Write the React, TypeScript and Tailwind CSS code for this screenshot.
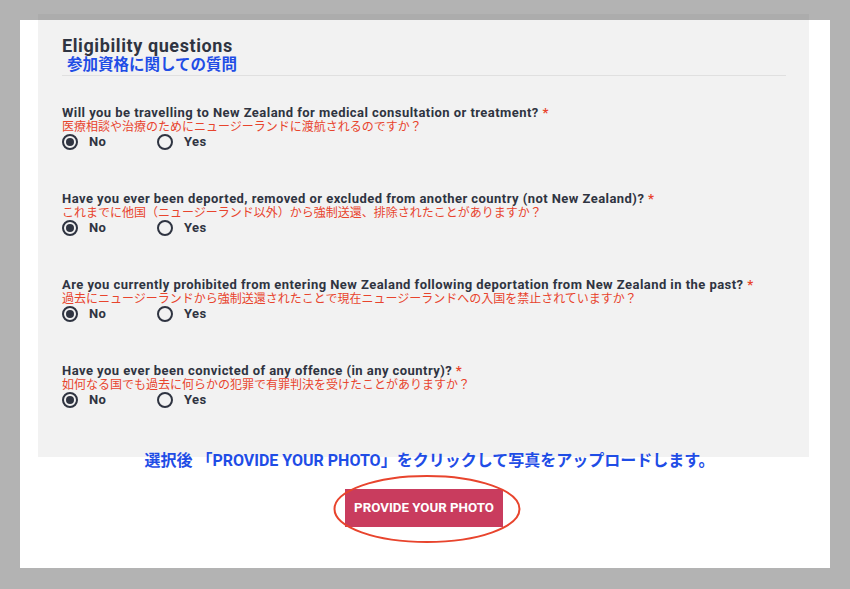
import React from "react";

const preguntas = [
  {
    en: "Will you be travelling to New Zealand for medical consultation or treatment?",
    ja: "医療相談や治療のためにニュージーランドに渡航されるのですか？",
  },
  {
    en: "Have you ever been deported, removed or excluded from another country (not New Zealand)?",
    ja: "これまでに他国（ニュージーランド以外）から強制送還、排除されたことがありますか？",
  },
  {
    en: "Are you currently prohibited from entering New Zealand following deportation from New Zealand in the past?",
    ja: "過去にニュージーランドから強制送還されたことで現在ニュージーランドへの入国を禁止されていますか？",
  },
  {
    en: "Have you ever been convicted of any offence (in any country)?",
    ja: "如何なる国でも過去に何らかの犯罪で有罪判決を受けたことがありますか？",
  },
];

const Radio: React.FC<{ checked?: boolean; label: string }> = ({ checked, label }) => (
  <label className="flex items-center gap-[11px]">
    <span className="w-[16px] h-[16px] rounded-full border-2 border-[#2f3441] flex items-center justify-center">
      {checked && <span className="w-[8px] h-[8px] rounded-full bg-[#2f3441]"></span>}
    </span>
    <span className="text-[13px] font-bold tracking-[0.4px] text-[#2f3441]">{label}</span>
  </label>
);

export default function App() {
  return (
    <div
      className="w-[850px] h-[589px] bg-[#b3b3b3] pt-[14px] overflow-hidden"
      style={{ fontFamily: "Roboto, 'Noto Sans CJK JP', sans-serif" }}
    >
      <div className="ml-[38px] w-[771px] h-[6px] bg-[#acacac]"></div>
      <div className="ml-[20px] w-[810px] h-[548px] bg-white">
        {/* Panel de preguntas */}
        <div className="ml-[18px] w-[771px] h-[437px] bg-[#f2f2f2] pl-[24px] pr-[23px] pt-[16px]">
          <h2 className="text-[18px] leading-[20px] font-bold tracking-[0.6px] text-[#2f3441]">Eligibility questions</h2>
          <div className="pl-[5px] text-[15.5px] leading-[18px] font-bold text-[#1f4de6]">参加資格に関しての質問</div>
          <div className="border-b border-[#e0e0e0] mt-[1px]"></div>

          <div className="pt-[30px] flex flex-col gap-[42px]">
            {preguntas.map((p, i) => (
              <div key={i}>
                <div className="text-[13px] leading-[14px] font-bold tracking-[0.45px] text-[#2f3441]">
                  {p.en} <span className="text-[#e8442d]">*</span>
                </div>
                <div className="text-[12px] leading-[14px] text-[#e8442d]">{p.ja}</div>
                <div className="flex items-center h-[16px]">
                  <div className="w-[95px]">
                    <Radio checked label="No" />
                  </div>
                  <Radio label="Yes" />
                </div>
              </div>
            ))}
          </div>
        </div>

        <div className="-mt-[6px] text-center pl-[9px] text-[16px] leading-[20px] font-bold text-[#1f4de6]">
          選択後 「PROVIDE YOUR PHOTO」をクリックして写真をアップロードします。
        </div>

        <div className="flex justify-center mt-[18px] pr-[2px]">
          <div className="relative">
            <button className="w-[158px] h-[38px] bg-[#c93c5e] text-white text-[13.3px] font-bold">
              PROVIDE YOUR PHOTO
            </button>
            <svg
              className="absolute left-[-12px] top-[-14px] pointer-events-none"
              width="188"
              height="68"
              viewBox="0 0 188 68"
            >
              <ellipse cx="94" cy="34" rx="92.5" ry="33" fill="none" stroke="#e8442d" strokeWidth="2" />
            </svg>
          </div>
        </div>
      </div>
    </div>
  );
}
